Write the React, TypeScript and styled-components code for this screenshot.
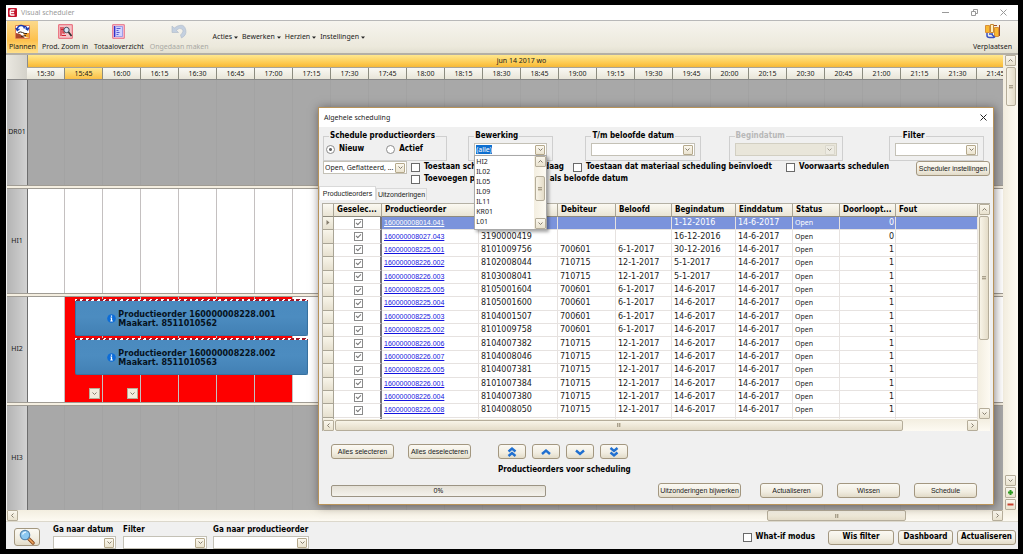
import React from "react";
import styled, { createGlobalStyle, css } from "styled-components";

const UI = `"Noto Sans", "Open Sans", sans-serif`;
const TIGHT = `"Liberation Sans", Arial, sans-serif`;
const WIDE = `"DejaVu Sans", sans-serif`;
const BOLD = `"DejaVu Sans Condensed", "DejaVu Sans", sans-serif`;

const Global = createGlobalStyle`
  *, *::before, *::after { box-sizing: border-box; }
  html, body { margin: 0; background: #000; }
  body { font: 7px/10px ${UI}; color: #1a1a1a; }
  button, input, select { font: inherit; color: inherit; margin: 0; padding: 0; }
  h1, h2, p { margin: 0; font: inherit; }
`;

const boldText = css`
  font-family: ${BOLD};
  font-size: 8px;
  font-weight: 700;
  color: #000;
`;

const Screen = styled.div`
  min-height: 100vh;
  padding: 5px 5px 5px 6px;
  display: flex;
  background: #000;
  overflow: hidden;
`;

const Window = styled.div`
  position: relative;
  flex: 1;
  min-width: 0;
  display: flex;
  flex-direction: column;
  background: #f0f0f0;
`;

/* ---------- title bar and toolbar ---------- */

const TitleBar = styled.header`
  display: flex;
  align-items: center;
  height: 16px;
  padding: 0 11px 0 2px;
  gap: 4px;
  background: #fff;
  color: #999;
  border-bottom: 1px solid #b8b8b8;
`;

const TitleText = styled.h1`
  flex: 1;
`;

const Bare = styled.button`
  display: flex;
  align-items: center;
  justify-content: center;
  border: 0;
  background: none;
`;

const CaptionButtons = styled.div`
  display: flex;
  gap: 22px;
  color: #999;
`;

const Toolbar = styled.nav`
  display: flex;
  gap: 2px;
  height: 34px;
  padding: 0 4px 0 1px;
  background: linear-gradient(#f6f4ee, #ece9dc 80%, #e2dfd0);
  border-bottom: 2px solid #b4b0a6;
`;

const Tool = styled.button<{ $on?: boolean; $off?: boolean }>`
  display: flex;
  flex-direction: column;
  align-items: center;
  gap: 3px;
  padding: 3px 2px 0;
  border: 0;
  white-space: nowrap;
  background: ${(p) => (p.$on ? "linear-gradient(#fbd98c, #fdc14d 60%, #ffe08a)" : "none")};
  color: ${(p) => (p.$off ? "#a8a8a4" : "#1a1a1a")};
`;

const Menus = styled.div`
  flex: 1;
  display: flex;
  align-items: center;
  gap: 4px;
`;

const MenuButton = styled(Bare)`
  gap: 2px;
`;

/* ---------- gantt ---------- */

const Gantt = styled.main`
  flex: 1;
  display: flex;
  min-width: 0;
`;

const Chart = styled.div`
  flex: 1;
  min-width: 0;
  display: flex;
  flex-direction: column;
  padding-left: 1px;
`;

const Head = styled.div`
  display: flex;
  height: 25px;
  border-bottom: 1px solid #888;
`;

const Corner = styled.div`
  flex: 0 0 21px;
  background: linear-gradient(90deg, #e9e7e0, #d4d2ca);
  border-right: 1px solid #8c8c8c;
`;

const Scale = styled.div`
  flex: 1;
  min-width: 0;
`;

const DayBand = styled.div`
  height: 12px;
  line-height: 12px;
  padding-left: 12px;
  text-align: center;
  background: linear-gradient(#ffe88e, #fdc84c 70%, #f5b838);
`;

const Hours = styled.div`
  display: flex;
  overflow: hidden;
  height: 12px;
  margin-left: -1px;
  border-top: 1px solid #a8a498;
`;

const Hour = styled.div<{ $on: boolean }>`
  flex: 0 0 38px;
  line-height: 12px;
  text-align: center;
  border-right: 1px solid #8c8c80;
  background: ${(p) =>
    p.$on ? "linear-gradient(#ffe88e, #fbbf45)" : "linear-gradient(#faf9f4, #e8e5d8)"};
`;

const Lane = styled.section`
  flex: 1 1 100px;
  display: flex;
`;

const LaneLabel = styled.div`
  flex: 0 0 21px;
  display: flex;
  align-items: center;
  justify-content: center;
  background: linear-gradient(90deg, #b4b4b4, #d2d2d2);
  border-right: 1px solid #6e6e6e;
`;

const Track = styled.div<{ $busy?: boolean }>`
  position: relative;
  flex: 1;
  min-width: 0;
  overflow: hidden;
  background: ${(p) => (p.$busy ? "#a8a8a8" : "#fff")};
  &::after {
    content: "";
    position: absolute;
    inset: 0 0 0 -1px;
    background: repeating-linear-gradient(
      90deg,
      transparent 0 37px,
      ${(p) => (p.$busy ? "#a3a3a3" : "#c4c0c0")} 37px 38px
    );
  }
`;

const Splitter = styled.div`
  height: 4px;
  background: #f4eee0;
  border-top: 1px solid #a09c94;
  border-bottom: 1px solid #a09c94;
`;

const Overload = styled.div`
  position: absolute;
  left: 37px;
  width: 228px;
  top: 0;
  bottom: 0;
  background: #fe0000;
`;

const Bar = styled.article<{ $top: number }>`
  position: absolute;
  z-index: 1;
  left: 47px;
  top: ${(p) => p.$top}px;
  width: 233px;
  height: 37px;
  display: flex;
  align-items: center;
  justify-content: center;
  gap: 2px;
  padding-top: 3px;
  border: 1px solid #38719f;
  border-top: 0;
  border-radius: 0 0 2px 2px;
  background: linear-gradient(#4a8abf, #4c8cc0 50%, #4280b4);
  font: 700 8px/9px ${WIDE};
  color: #06121c;
  &::before {
    content: "";
    position: absolute;
    inset: 0 -1px auto -1px;
    height: 2px;
    background: repeating-linear-gradient(120deg, #fff 0 2px, #a01828 2px 5px);
  }
`;

const Expand = styled.button<{ $left: number }>`
  position: absolute;
  z-index: 1;
  left: ${(p) => p.$left}px;
  bottom: 3px;
  width: 11px;
  height: 11px;
  display: flex;
  align-items: center;
  justify-content: center;
  border: 1px solid #b8ae96;
  background: #f2ecdc;
`;

/* ---------- scroll bars ---------- */

const ScrollV = styled.div<{ $w: number }>`
  flex: 0 0 ${(p) => p.$w}px;
  display: flex;
  flex-direction: column;
  align-items: center;
  gap: 1px;
  background: linear-gradient(90deg, #f3eee0, #fdfaf2);
`;

const ScrollH = styled.div`
  display: flex;
  align-items: center;
  gap: 1px;
  height: 12px;
  background: linear-gradient(#f3eee0, #fdfaf2);
`;

const ScrollButton = styled.button`
  flex: 0 0 11px;
  width: 11px;
  height: 11px;
  display: flex;
  align-items: center;
  justify-content: center;
  border: 1px solid #b5ad9a;
  border-radius: 1px;
  background: linear-gradient(#faf7ee, #e9e2ce);
`;

const Thumb = styled.div<{ $size: number; $h?: boolean }>`
  flex: 0 ${(p) => (p.$h ? 1 : 0)} ${(p) => p.$size}px;
  ${(p) => (p.$h ? "height: 11px;" : "width: 10px;")}
  display: flex;
  align-items: center;
  justify-content: center;
  border: 1px solid #b5ad9a;
  border-radius: 2px;
  background: linear-gradient(${(p) => (p.$h ? "180deg" : "90deg")}, #f8f4e8, #e4dcc8);
  &::after {
    content: "";
    width: 4px;
    height: 4px;
    background: repeating-linear-gradient(
      ${(p) => (p.$h ? "90deg" : "180deg")},
      #a9a08c 0 1px,
      #d4ccb8 1px 2px
    );
  }
`;

const Room = styled.div`
  flex: 1;
`;

const MainScrollH = styled(ScrollH)`
  padding: 0 15px 0 1px;
  border-bottom: 1px solid #dcd8cc;
`;

const ThumbRest = styled.div`
  flex: 0 0 84px;
`;

/* ---------- form parts ---------- */

const Box = styled.span<{ $off?: boolean }>`
  display: flex;
  align-items: center;
  height: 13px;
  padding: 0 1px;
  border: 1px solid ${(p) => (p.$off ? "#d2cfc2" : "#c4c1b6")};
  background: ${(p) => (p.$off ? "#e9e6da" : "#fff")};
  font: 400 7px/10px ${UI};
  color: #1a1a1a;
`;

const Select = styled.select`
  appearance: none;
  flex: 1;
  min-width: 0;
  height: 11px;
  border: 0;
  outline: 0;
  background: none;
`;

const DropMark = styled.span<{ $off?: boolean }>`
  flex: 0 0 10px;
  height: 10px;
  display: flex;
  align-items: center;
  justify-content: center;
  border: 1px solid ${(p) => (p.$off ? "#d6d3c8" : "#b5a98c")};
  border-radius: 1px;
  background: ${(p) => (p.$off ? "#f0eee6" : "linear-gradient(#fbf8ef, #ebe4d0)")};
  opacity: ${(p) => (p.$off ? 0.7 : 1)};
`;

const Button = styled.button<{ $strong?: boolean }>`
  display: flex;
  align-items: center;
  justify-content: center;
  height: 15px;
  white-space: nowrap;
  font-family: ${TIGHT};
  border: 1px solid #a39780;
  border-radius: 3px;
  background: linear-gradient(#fbf9f3, #f1ede1 60%, #e2dbc8);
  ${(p) => p.$strong && boldText}
`;

const Check = styled.label`
  ${boldText}
  display: flex;
  align-items: center;
  gap: 4px;
  height: 12px;
  white-space: nowrap;
`;

const Tick = styled.input`
  appearance: none;
  flex: none;
  width: 9px;
  height: 9px;
  border: 1px solid #6a6a6a;
  background: #fff;
`;

const Radio = styled.input`
  appearance: none;
  flex: none;
  width: 9px;
  height: 9px;
  border: 1px solid #8c8c8c;
  border-radius: 50%;
  background: #fff;
  &:checked {
    background: radial-gradient(#666 0 1px, #fff 2px);
  }
`;

/* ---------- bottom bar ---------- */

const Footer = styled.footer`
  display: flex;
  align-items: center;
  height: 27px;
  padding: 3px 2px 0 8px;
`;

const FindButton = styled(Button)`
  width: 26px;
  height: 18px;
  margin-right: 13px;
`;

const FooterField = styled.label<{ $w: number; $gap: number }>`
  ${boldText}
  line-height: 10px;
  width: ${(p) => p.$w}px;
  margin-right: ${(p) => p.$gap}px;
  white-space: nowrap;
  display: flex;
  flex-direction: column;
  gap: 1px;
`;

const FooterButtons = styled.div`
  display: flex;
  gap: 4px;
  margin-left: 13px;
`;

const FooterButton = styled(Button)<{ $w: number }>`
  width: ${(p) => p.$w}px;
`;

/* ---------- dialog ---------- */

const Dialog = styled.div`
  position: absolute;
  z-index: 5;
  top: 102px;
  left: 312px;
  right: 24px;
  border: 1px solid #b8935a;
  background: #f0f0f0;
  box-shadow: 1px 1px 9px rgba(40, 30, 30, 0.55);
`;

const DialogTitle = styled.div`
  display: flex;
  align-items: center;
  justify-content: space-between;
  height: 19px;
  padding: 0 6px 0 5px;
  background: #fff;
`;

const Groups = styled.div`
  display: grid;
  grid-template-columns: 124fr 21fr 85fr 32fr 115fr 28fr 114fr 46fr 95fr;
  padding: 4px 9px 0 4px;
`;

const Group = styled.fieldset<{ $off?: boolean; $col: number }>`
  ${boldText}
  grid-column: ${(p) => p.$col};
  position: relative;
  height: 30px;
  min-width: 0;
  margin: 0;
  padding: 2px 5px 0;
  border: 1px solid #cfcfcf;
  color: ${(p) => (p.$off ? "#b8b8b8" : "#000")};
`;

const Legend = styled.legend<{ $in?: number }>`
  margin-left: ${(p) => p.$in ?? 0}px;
  padding: 0 1px;
  line-height: 10px;
  white-space: nowrap;
`;

const Radios = styled.div`
  display: flex;
  gap: 22px;
  margin-left: -3px;
`;

const ComboInput = styled.input`
  width: 16px;
  height: 9px;
  border: 0;
  outline: 0;
  background: #0f6fd0;
  color: #fff;
`;

const List = styled.ul`
  position: absolute;
  z-index: 3;
  top: 14px;
  left: 5px;
  right: 5px;
  height: 75px;
  margin: 0;
  padding: 0;
  display: flex;
  list-style: none;
  border: 1px solid #a8a8a8;
  background: #fff;
  box-shadow: 2px 2px 3px rgba(0, 0, 0, 0.35);
  font: 400 7px/10px ${UI};
  color: #1a1a1a;
`;

const ListItems = styled.div`
  flex: 1;
  padding: 1px 1px 0;
`;

const Options = styled.div`
  display: grid;
  grid-template-columns: 84px 162px 213px 1fr 74px;
  align-items: start;
  padding: 0 3px 0 4px;
  height: 25px;
`;

const OptionCell = styled.div`
  padding-left: 4px;
`;

const SplitText = styled.span<{ $w: number }>`
  flex: none;
  width: ${(p) => p.$w}px;
  display: flex;
  justify-content: space-between;
`;

const Tabs = styled.div`
  display: flex;
  align-items: flex-end;
  height: 14px;
`;

const Tab = styled.button<{ $on?: boolean }>`
  height: ${(p) => (p.$on ? 14 : 12)}px;
  width: ${(p) => (p.$on ? 57 : 51)}px;
  font-family: ${TIGHT};
  border: 1px solid #d9d9d9;
  border-bottom: 0;
  background: ${(p) => (p.$on ? "#fff" : "#f3f3f3")};
`;

const Sheet = styled.div`
  margin: 3px 3px 0;
  border-top: 1px solid #b4b0a4;
  border-left: 1px solid #b4b0a4;
  background: #fff;
`;

const SheetTop = styled.div`
  display: flex;
  height: 215px;
`;

const SheetView = styled.div`
  flex: 1;
  min-width: 0;
  overflow: hidden;
`;

const Table = styled.table`
  width: 100%;
  height: 226px;
  table-layout: fixed;
  border-collapse: separate;
  border-spacing: 0;
  font: 400 8px/10px ${WIDE};
`;

const Th = styled.th`
  ${boldText}
  height: 13px;
  padding: 0 0 0 3px;
  text-align: left;
  white-space: nowrap;
  overflow: hidden;
  background: linear-gradient(#fbf9f2, #e9e4d4);
  border-right: 1px solid #a9a495;
  border-bottom: 1px solid #8f8b7e;
`;

const Td = styled.td<{ $kind?: "mark" | "tick" | "small" | "num" | "link" }>`
  padding: 0 0 0 2px;
  white-space: nowrap;
  overflow: hidden;
  border-right: 1px solid #e6e2e0;
  border-bottom: 1px solid #e6e2e0;
  ${(p) =>
    p.$kind === "mark" &&
    css`
      padding: 0 0 0 3px;
      background: linear-gradient(#f8f5ea, #e6e0cf);
      border-color: #a9a495;
    `}
  ${(p) =>
    p.$kind === "tick" &&
    css`
      border-right: 2px solid #77757c;
      background: #fff;
    `}
  ${(p) => p.$kind === "small" && `font-family: ${UI}; font-size: 7px;`}
  ${(p) => p.$kind === "link" && `font-family: ${TIGHT}; font-size: 7px;`}
  ${(p) => p.$kind === "num" && "text-align: right; padding-right: 1px;"}
`;

const Tr = styled.tr<{ $on: boolean }>`
  ${(p) =>
    p.$on &&
    css`
      background: #7b93dc;
      color: #fff;
    `}
`;

const Link = styled.a<{ $on: boolean }>`
  color: ${(p) => (p.$on ? "#fff" : "#1414e0")};
`;

const RowTick = styled.input`
  appearance: none;
  display: block;
  width: 9px;
  height: 9px;
  margin: 0 auto;
  border: 1px solid #8a8a8a;
  background: #fff;
  &:checked::after {
    content: "";
    display: block;
    width: 5px;
    height: 3px;
    margin: 1px;
    border: solid #777;
    border-width: 0 0 1px 1px;
    transform: rotate(-45deg);
  }
`;

const SheetScroll = styled(ScrollH)`
  padding-right: 12px;
`;

const Actions = styled.div`
  display: flex;
  align-items: flex-start;
  padding: 13px 12px 0;
`;

const ActionButton = styled(Button)<{ $w?: number }>`
  width: ${(p) => p.$w ?? 63}px;
`;

const Pair = styled.div`
  display: flex;
  gap: 14px;
  margin-right: 27px;
`;

const Arrows = styled.div`
  display: flex;
  gap: 6px;
  margin-bottom: 6px;
`;

const Caption = styled.p`
  ${boldText}
  white-space: nowrap;
`;

const BottomRow = styled.div`
  display: flex;
  align-items: center;
  gap: 14px;
  padding: 8px 16px 6px 12px;
`;

const Progress = styled.div`
  width: 215px;
  height: 12px;
  line-height: 10px;
  text-align: center;
  border: 1px solid #9c9484;
  border-radius: 2px;
  background: linear-gradient(#e4e0d6, #f4f2ec);
`;

const Push = styled.div`
  flex: 1;
  display: flex;
  justify-content: flex-end;
  margin-right: 5px;
`;

/* ---------- drawings ---------- */

const paths = {
  down: "M1.5 2.5 3.5 4.5 5.5 2.5",
  up: "M1.5 4.5 3.5 2.5 5.5 4.5",
  left: "M4.5 1.5 2.5 3.5 4.5 5.5",
  right: "M2.5 1.5 4.5 3.5 2.5 5.5",
};

const Chevron = ({ to }: { to: keyof typeof paths }) => (
  <svg width="7" height="7" viewBox="0 0 7 7" fill="none" stroke="#857d6e" aria-hidden>
    <path d={paths[to]} />
  </svg>
);

const Caret = () => (
  <svg width="4" height="3" viewBox="0 0 4 3" aria-hidden>
    <path d="M0 .5h4L2 2.7z" fill="#222" />
  </svg>
);

const RowMark = () => (
  <svg width="4" height="5" viewBox="0 0 4 5" aria-hidden>
    <path d="M.5 0 3.5 2.5.5 5z" fill="#857d6e" />
  </svg>
);

const Cross = ({ color }: { color: string }) => (
  <svg width="7" height="7" viewBox="0 0 7 7" stroke={color} aria-hidden>
    <path d="M.5.5l6 6M6.5.5l-6 6" />
  </svg>
);

const AppLogo = () => (
  <svg width="9" height="9" viewBox="0 0 9 9" aria-hidden>
    <rect width="9" height="9" rx="1" fill="#c4142c" />
    <path d="M6.5 2H3.2Q2.2 2 2.2 3v3q0 1 1 1h3.3M2.5 4.5h3.6" stroke="#fff" strokeWidth="1.3" fill="none" />
  </svg>
);

const PlanIcon = () => (
  <svg width="15" height="15" viewBox="0 0 15 15" aria-hidden>
    <path d="M.5 1.5h14v13H.5z" fill="#fff" stroke="#e08050" />
    <path d="M1 9l4 1 5 4H1z" fill="#a8482c" />
    <path d="M8 9h6v5l-4-1z" fill="#f0a030" />
    <path d="M2 6Q3 1 6.5 1.5T9 4.5M.8 4l1.5 2.5L4.5 5M8 3q3-2 4.5 2.5M10.5 4.500l2.2 1.500L14 3.5" fill="none" stroke="#1838b0" strokeWidth="1.4" />
    <path d="M3 9q2-2 4.5-.5T12 9.5M6 12.5l5-1" fill="none" stroke="#3a2418" />
  </svg>
);

const ZoomIcon = () => (
  <svg width="15" height="15" viewBox="0 0 15 15" aria-hidden>
    <path d="M.7.7h13.6v13.6H.7z" fill="#f6c4c8" stroke="#e86070" />
    <path d="M3 3v9M5 3v6h2M3.5 5.5h3M4 11.5h4" fill="none" stroke="#d02030" strokeWidth="1.2" />
    <circle cx="8.5" cy="6" r="2.7" fill="#d8e8f8" stroke="#404858" />
    <path d="M10.5 8l3 4" stroke="#303030" strokeWidth="1.7" />
  </svg>
);

const OverviewIcon = () => (
  <svg width="13" height="15" viewBox="0 0 13 15" aria-hidden>
    <path d="M.7.7h11.6v13.6H.7z" fill="#f4c8d8" stroke="#e87088" />
    <path d="M2.5 2v11" stroke="#3030c8" strokeWidth="1.2" />
    <path d="M3.5 2.5h7v10h-7z" fill="#d0d4ff" stroke="#8088e8" strokeWidth=".7" />
    <path d="M4.5 4.5h4M4.5 6.5h2M4.5 8.5h3M4.5 10.5h2" stroke="#3838c8" strokeWidth=".8" />
  </svg>
);

const UndoIcon = () => (
  <svg width="16" height="15" viewBox="0 0 16 15" aria-hidden>
    <path d="M1 2v6.5h6.5L5.3 6.3Q8.5 3 11 5t-1.5 6l1 3q5.5-3 4.3-8T10 1.2 3.2 4z" fill="#c4d0e0" stroke="#acb8c8" strokeWidth=".6" />
  </svg>
);

const MoveIcon = () => (
  <svg width="15" height="15" viewBox="0 0 15 15" aria-hidden>
    <path d="M.5 1.5h4v7h-4zM9.5 3.5h4v9h-4z" fill="#f8b830" stroke="#d89038" />
    <path d="M5.5.5h3v8h-3z" fill="#fff0c0" stroke="#c88830" />
    <path d="M9 1.5h3M14.5 1v11" stroke="#a05028" />
    <path d="M2 9v2.5q0 2 2.5 2H9M7 10.5l3 3M4 10h4" fill="none" stroke="#3850c0" strokeWidth="1.5" />
  </svg>
);

const FindIcon = () => (
  <svg width="16" height="16" viewBox="0 0 16 16" aria-hidden>
    <path d="M9.5 9.5L14 14" stroke="#8a4a20" strokeWidth="3.4" strokeLinecap="round" />
    <path d="M9.5 9.5L14 14" stroke="#f0a860" strokeWidth="1.6" strokeLinecap="round" />
    <circle cx="6" cy="6" r="4.7" fill="#8cc8f0" stroke="#5888b0" strokeWidth="1.2" />
    <path d="M3.5 5.5Q4.5 3 7 3.2" stroke="#e8f6ff" strokeWidth="1.3" fill="none" />
  </svg>
);

const InfoIcon = () => (
  <svg width="9" height="9" viewBox="0 0 9 9" aria-hidden>
    <circle cx="4.5" cy="4.5" r="4.3" fill="#0c6cd8" />
    <path d="M4.5 1.5v1.3M3.5 4h1v3M3.3 7h2.5" stroke="#fff" strokeWidth="1.2" fill="none" />
  </svg>
);

const arrowPaths = {
  first: "M2.5 5.5 6 2.5l3.5 3M2.5 10 6 7l3.5 3",
  up: "M2 8 6 4.5 10 8",
  down: "M2 4.5 6 8l4-3.5",
  last: "M2.5 2 6 5l3.5-3M2.5 6.5 6 9.5l3.5-3",
};

const MoveArrow = ({ to }: { to: keyof typeof arrowPaths }) => (
  <svg width="12" height="12" viewBox="0 0 12 12" fill="none" stroke="#1f6fd0" strokeWidth="2.4" aria-hidden>
    <path d={arrowPaths[to]} />
  </svg>
);

/* ---------- data ---------- */

const hours = Array.from({ length: 26 }, (_, i) => {
  const m = 15 * 60 + 30 + i * 15;
  return `${Math.floor(m / 60)}:${String(m % 60).padStart(2, "0")}`;
});

const rows: string[][] = [
  ["160000008014.041", "", "", "", "1-12-2016", "0"],
  ["160000008027.043", "3190000419", "", "", "16-12-2016", "0"],
  ["160000008225.001", "8101009756", "700601", "6-1-2017", "30-12-2016", "1"],
  ["160000008226.002", "8102008044", "710715", "12-1-2017", "5-1-2017", "1"],
  ["160000008226.003", "8103008041", "710715", "12-1-2017", "5-1-2017", "1"],
  ["160000008225.005", "8105001604", "700601", "6-1-2017", "14-6-2017", "1"],
  ["160000008225.004", "8105001600", "700601", "6-1-2017", "14-6-2017", "1"],
  ["160000008225.003", "8104001507", "700601", "6-1-2017", "14-6-2017", "1"],
  ["160000008225.002", "8101009758", "700601", "6-1-2017", "14-6-2017", "1"],
  ["160000008226.006", "8104007382", "710715", "12-1-2017", "14-6-2017", "1"],
  ["160000008226.007", "8104008046", "710715", "12-1-2017", "14-6-2017", "1"],
  ["160000008226.005", "8104007381", "710715", "12-1-2017", "14-6-2017", "1"],
  ["160000008226.001", "8101007384", "710715", "12-1-2017", "14-6-2017", "1"],
  ["160000008226.004", "8104007380", "710715", "12-1-2017", "14-6-2017", "1"],
  ["160000008226.008", "8104008050", "710715", "12-1-2017", "14-6-2017", "1"],
];

const columns: [string, number | undefined][] = [
  ["", 11],
  ["Geselec...", 48],
  ["Productieorder", 97],
  ["", 79],
  ["Debiteur", 58],
  ["Beloofd", 56],
  ["Begindatum", 64],
  ["Einddatum", 57],
  ["Status", 47],
  ["Doorloopt...", 56],
  ["Fout", undefined],
];

/* ---------- composed parts ---------- */

const Drop = ({ label, text = "", off }: { label?: string; text?: string; off?: boolean }) => (
  <Box $off={off}>
    <Select aria-label={label} disabled={off}>
      <option>{text}</option>
    </Select>
    <DropMark $off={off}>
      <Chevron to="down" />
    </DropMark>
  </Box>
);

const OrderBar = ({ top, order, card }: { top: number; order: string; card: string }) => (
  <Bar $top={top}>
    <InfoIcon />
    <div>
      Productieorder {order}
      <br />
      Maakart. {card}
    </div>
  </Bar>
);

const SchedulingDialog = () => (
  <Dialog role="dialog" aria-label="Algehele scheduling">
    <DialogTitle>
      <h2>Algehele scheduling</h2>
      <Bare aria-label="Sluiten">
        <Cross color="#222" />
      </Bare>
    </DialogTitle>

    <Groups>
      <Group $col={1}>
        <Legend>Schedule productieorders</Legend>
        <Radios>
          <Check>
            <Radio type="radio" name="soort" defaultChecked /> Nieuw
          </Check>
          <Check>
            <Radio type="radio" name="soort" /> Actief
          </Check>
        </Radios>
      </Group>
      <Group $col={3}>
        <Legend>Bewerking</Legend>
        <Box>
          <ComboInput role="combobox" aria-label="Bewerking" aria-expanded defaultValue="(alle)" />
          <Room />
          <DropMark>
            <Chevron to="down" />
          </DropMark>
        </Box>
        <List>
          <ListItems>
            {["HI2", "IL02", "IL05", "IL09", "IL11", "KR01", "L01"].map((c) => (
              <li key={c}>{c}</li>
            ))}
          </ListItems>
          <ScrollV as="li" $w={12}>
            <ScrollButton aria-label="Omhoog">
              <Chevron to="up" />
            </ScrollButton>
            <Room />
            <Thumb $size={25} />
            <Room />
            <Room />
            <ScrollButton aria-label="Omlaag">
              <Chevron to="down" />
            </ScrollButton>
          </ScrollV>
        </List>
      </Group>
      <Group $col={5}>
        <Legend>T/m beloofde datum</Legend>
        <Drop label="T/m beloofde datum" />
      </Group>
      <Group $col={7} $off>
        <Legend>Begindatum</Legend>
        <Drop label="Begindatum" off />
      </Group>
      <Group $col={9}>
        <Legend $in={7}>Filter</Legend>
        <Drop label="Filter" />
      </Group>
    </Groups>

    <Options>
      <Drop label="Status" text="Open, Geflatteerd, ..." />
      <OptionCell>
        <Check>
          <Tick type="checkbox" />
          <SplitText $w={140}>
            <span>Toestaan sch</span>
            <span>daag</span>
          </SplitText>
        </Check>
        <Check>
          <Tick type="checkbox" />
          <SplitText $w={204}>
            <span>Toevoegen p</span>
            <span>als beloofde datum</span>
          </SplitText>
        </Check>
      </OptionCell>
      <OptionCell>
        <Check>
          <Tick type="checkbox" /> Toestaan dat materiaal scheduling beïnvloedt
        </Check>
      </OptionCell>
      <OptionCell>
        <Check>
          <Tick type="checkbox" /> Voorwaarts schedulen
        </Check>
      </OptionCell>
      <Button>Scheduler instellingen</Button>
    </Options>

    <Tabs role="tablist">
      <Tab role="tab" aria-selected $on>
        Productieorders
      </Tab>
      <Tab role="tab">Uitzonderingen</Tab>
    </Tabs>

    <Sheet>
      <SheetTop>
        <SheetView>
          <Table>
            <colgroup>
              {columns.map(([, w], i) => (
                <col key={i} width={w} />
              ))}
            </colgroup>
            <thead>
              <tr>
                {columns.map(([name], i) => (
                  <Th key={i}>{name}</Th>
                ))}
              </tr>
            </thead>
            <tbody>
              {rows.map(([order, card, debtor, promised, begin, lead], i) => (
                <Tr key={order} $on={i === 0}>
                  <Td $kind="mark">{i === 0 && <RowMark />}</Td>
                  <Td $kind="tick">
                    <RowTick type="checkbox" defaultChecked aria-label={order} />
                  </Td>
                  <Td $kind="link">
                    <Link href="#order" $on={i === 0}>
                      {order}
                    </Link>
                  </Td>
                  <Td>{card}</Td>
                  <Td>{debtor}</Td>
                  <Td>{promised}</Td>
                  <Td>{begin}</Td>
                  <Td>14-6-2017</Td>
                  <Td $kind="small">Open</Td>
                  <Td $kind="num">{lead}</Td>
                  <Td />
                </Tr>
              ))}
              <Tr $on={false}>
                <Td $kind="mark" />
                <Td $kind="tick">
                  <RowTick type="checkbox" aria-label="Volgende order" />
                </Td>
                {columns.slice(2).map((_, i) => (
                  <Td key={i} />
                ))}
              </Tr>
            </tbody>
          </Table>
        </SheetView>
        <ScrollV $w={12}>
          <ScrollButton aria-label="Omhoog">
            <Chevron to="up" />
          </ScrollButton>
          <Thumb $size={124} />
          <Room />
          <ScrollButton aria-label="Omlaag">
            <Chevron to="down" />
          </ScrollButton>
        </ScrollV>
      </SheetTop>
      <SheetScroll>
        <ScrollButton aria-label="Links">
          <Chevron to="left" />
        </ScrollButton>
        <Thumb $size={568} $h />
        <Room />
        <ScrollButton aria-label="Rechts">
          <Chevron to="right" />
        </ScrollButton>
      </SheetScroll>
    </Sheet>

    <Actions>
      <Pair>
        <ActionButton>Alles selecteren</ActionButton>
        <ActionButton>Alles deselecteren</ActionButton>
      </Pair>
      <div>
        <Arrows>
          <ActionButton $w={28} aria-label="Eerste">
            <MoveArrow to="first" />
          </ActionButton>
          <ActionButton $w={28} aria-label="Omhoog">
            <MoveArrow to="up" />
          </ActionButton>
          <ActionButton $w={28} aria-label="Omlaag">
            <MoveArrow to="down" />
          </ActionButton>
          <ActionButton $w={28} aria-label="Laatste">
            <MoveArrow to="last" />
          </ActionButton>
        </Arrows>
        <Caption>Productieorders voor scheduling</Caption>
      </div>
    </Actions>

    <BottomRow>
      <Progress role="progressbar" aria-valuenow={0}>
        0%
      </Progress>
      <Push>
        <ActionButton $w={83}>Uitzonderingen bijwerken</ActionButton>
      </Push>
      <ActionButton>Actualiseren</ActionButton>
      <ActionButton>Wissen</ActionButton>
      <ActionButton>Schedule</ActionButton>
    </BottomRow>
  </Dialog>
);

export default function App() {
  return (
    <Screen>
      <Global />
      <Window>
        <TitleBar>
          <AppLogo />
          <TitleText>Visual scheduler</TitleText>
          <CaptionButtons>
            <Bare aria-label="Minimaliseren">
              <svg width="7" height="7" viewBox="0 0 7 7" stroke="#999" aria-hidden>
                <path d="M0 3.5h7" />
              </svg>
            </Bare>
            <Bare aria-label="Herstellen">
              <svg width="7" height="7" viewBox="0 0 7 7" fill="none" stroke="#999" aria-hidden>
                <path d="M.5 2.5h4v4h-4zM2.5 2V.5h4v4H5" />
              </svg>
            </Bare>
            <Bare aria-label="Sluiten">
              <Cross color="#999" />
            </Bare>
          </CaptionButtons>
        </TitleBar>

        <Toolbar>
          <Tool $on>
            <PlanIcon />
            Plannen
          </Tool>
          <Tool>
            <ZoomIcon />
            Prod. Zoom in
          </Tool>
          <Tool>
            <OverviewIcon />
            Totaaloverzicht
          </Tool>
          <Tool $off>
            <UndoIcon />
            Ongedaan maken
          </Tool>
          <Menus>
            {["Acties", "Bewerken", "Herzien", "Instellingen"].map((m) => (
              <MenuButton key={m}>
                {m}
                <Caret />
              </MenuButton>
            ))}
          </Menus>
          <Tool>
            <MoveIcon />
            Verplaatsen
          </Tool>
        </Toolbar>

        <Gantt>
          <Chart>
            <Head>
              <Corner />
              <Scale>
                <DayBand>jun 14 2017 wo</DayBand>
                <Hours>
                  {hours.map((h) => (
                    <Hour key={h} $on={h === "15:45"}>
                      {h}
                    </Hour>
                  ))}
                </Hours>
              </Scale>
            </Head>
            <Lane>
              <LaneLabel>DR01</LaneLabel>
              <Track $busy />
            </Lane>
            <Splitter />
            <Lane>
              <LaneLabel>HI1</LaneLabel>
              <Track />
            </Lane>
            <Splitter />
            <Lane>
              <LaneLabel>HI2</LaneLabel>
              <Track>
                <Overload />
                <OrderBar top={2} order="160000008228.001" card="8511010562" />
                <OrderBar top={41} order="160000008228.002" card="8511010563" />
                <Expand $left={61} aria-label="Meer 15:45">
                  <Chevron to="down" />
                </Expand>
                <Expand $left={99} aria-label="Meer 16:00">
                  <Chevron to="down" />
                </Expand>
              </Track>
            </Lane>
            <Splitter />
            <Lane>
              <LaneLabel>HI3</LaneLabel>
              <Track $busy />
            </Lane>
          </Chart>
          <ScrollV $w={15}>
            <ScrollButton aria-label="Omhoog">
              <Chevron to="up" />
            </ScrollButton>
            <Thumb $size={39} />
            <Room />
            <ScrollButton aria-label="Omlaag">
              <Chevron to="down" />
            </ScrollButton>
            <ScrollButton aria-label="Inzoomen">
              <svg width="7" height="7" viewBox="0 0 7 7" stroke="#2c9a20" strokeWidth="2" aria-hidden>
                <path d="M3.5 1v5M1 3.5h5" />
              </svg>
            </ScrollButton>
            <ScrollButton aria-label="Uitzoomen">
              <svg width="7" height="7" viewBox="0 0 7 7" stroke="#c8402c" strokeWidth="2" aria-hidden>
                <path d="M.5 3.5h6" />
              </svg>
            </ScrollButton>
          </ScrollV>
        </Gantt>

        <MainScrollH>
          <ScrollButton aria-label="Links">
            <Chevron to="left" />
          </ScrollButton>
          <Room />
          <Thumb $size={139} $h />
          <ThumbRest />
          <ScrollButton aria-label="Rechts">
            <Chevron to="right" />
          </ScrollButton>
        </MainScrollH>

        <Footer>
          <FindButton aria-label="Zoeken">
            <FindIcon />
          </FindButton>
          <FooterField $w={63} $gap={7}>
            Ga naar datum
            <Drop />
          </FooterField>
          <FooterField $w={84} $gap={6}>
            Filter
            <Drop />
          </FooterField>
          <FooterField $w={96} $gap={0}>
            Ga naar productieorder
            <Drop />
          </FooterField>
          <Room />
          <Check>
            <Tick type="checkbox" /> What-if modus
          </Check>
          <FooterButtons>
            <FooterButton $strong $w={66}>
              Wis filter
            </FooterButton>
            <FooterButton $strong $w={55}>
              Dashboard
            </FooterButton>
            <FooterButton $strong $w={59}>
              Actualiseren
            </FooterButton>
          </FooterButtons>
        </Footer>

        <SchedulingDialog />
      </Window>
    </Screen>
  );
}
